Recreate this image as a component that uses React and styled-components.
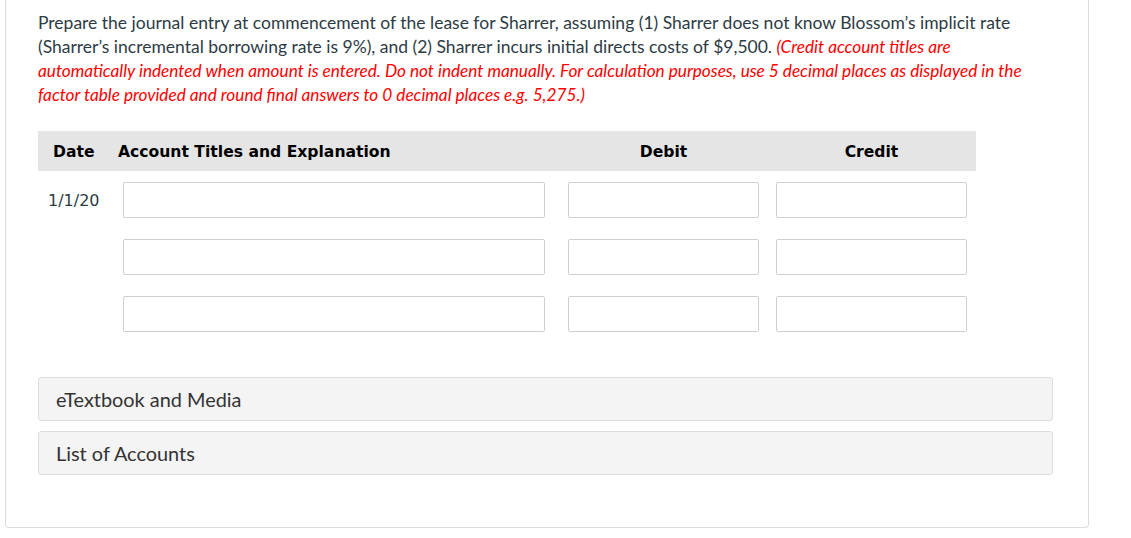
import React from "react";
import styled, { createGlobalStyle } from "styled-components";

const Global = createGlobalStyle`
  html, body { margin: 0; padding: 0; background: #fff; }
  * { box-sizing: border-box; }
`;

const Card = styled.div`
  margin-left: 5px;
  width: 1084px;
  border: 1px solid #dcdcdc;
  border-top: none;
  border-radius: 0 0 4px 4px;
  padding: 11px 35px 52px 32px;
  font-family: Lato, "Open Sans", sans-serif;
  color: #2d3b45;
`;

const Prompt = styled.p`
  margin: 0;
  font-size: 17.5px;
  line-height: 24px;
  white-space: nowrap;
`;

const Note = styled.em`
  color: #f00;
  font-style: italic;
  font-size: 17.2px;
`;

const Table = styled.div`
  margin-top: 24px;
  width: 938px;
  display: grid;
  grid-template-columns: 80px 442px 207px 209px;
  font-family: "DejaVu Sans", Verdana, sans-serif;
`;

const HeadCell = styled.div`
  background: #e5e5e5;
  height: 40px;
  display: flex;
  align-items: center;
  justify-content: ${(p) => (p.$center ? "center" : "flex-start")};
  padding-left: ${(p) => p.$pad || 0}px;
  font-weight: bold;
  font-size: 15.6px;
  color: #000;
  margin-bottom: 11px;
  padding-top: 1px;
`;

const Cell = styled.div`
  height: 57px;
  display: flex;
  align-items: flex-start;
  justify-content: ${(p) => (p.$center ? "center" : "flex-start")};
  padding-left: ${(p) => p.$pad || 0}px;
`;

const DateText = styled.span`
  font-size: 16px;
  line-height: 37px;
  color: #2d3b45;
`;

const Field = styled.input`
  width: ${(p) => p.$w}px;
  height: 36px;
  border: 1px solid #cfcfcf;
  border-radius: 2px;
  background: #fff;
  outline: none;
  padding: 0 6px;
  font: inherit;
`;

const Sections = styled.div`
  margin-top: 24px;
  display: flex;
  flex-direction: column;
  gap: 10px;
`;

const Section = styled.div`
  height: 44px;
  background: #f4f4f4;
  border: 1px solid #dddddd;
  border-radius: 3px;
  display: flex;
  align-items: center;
  padding-left: 17px;
  font-size: 19.9px;
  color: #333;
`;

const rows = ["1/1/20", "", ""];

export default function App() {
  return (
    <>
      <Global />
      <Card>
        <Prompt>
          Prepare the journal entry at commencement of the lease for Sharrer, assuming (1) Sharrer does not know Blossom’s implicit rate
          <br />
          (Sharrer’s incremental borrowing rate is 9%), and (2) Sharrer incurs initial directs costs of $9,500.{" "}
          <Note>(Credit account titles are</Note>
          <br />
          <Note>automatically indented when amount is entered. Do not indent manually. For calculation purposes, use 5 decimal places as displayed in the</Note>
          <br />
          <Note>factor table provided and round final answers to 0 decimal places e.g. 5,275.)</Note>
        </Prompt>
        <Table>
          <HeadCell $pad={15}>Date</HeadCell>
          <HeadCell>Account Titles and Explanation</HeadCell>
          <HeadCell $center>Debit</HeadCell>
          <HeadCell $center>Credit</HeadCell>
          {rows.map((d, i) => (
            <React.Fragment key={i}>
              <Cell $pad={10}>
                <DateText>{d}</DateText>
              </Cell>
              <Cell $pad={5}>
                <Field $w={422} />
              </Cell>
              <Cell $center>
                <Field $w={191} />
              </Cell>
              <Cell $center>
                <Field $w={191} />
              </Cell>
            </React.Fragment>
          ))}
        </Table>
        <Sections>
          <Section>eTextbook and Media</Section>
          <Section>List of Accounts</Section>
        </Sections>
      </Card>
    </>
  );
}
